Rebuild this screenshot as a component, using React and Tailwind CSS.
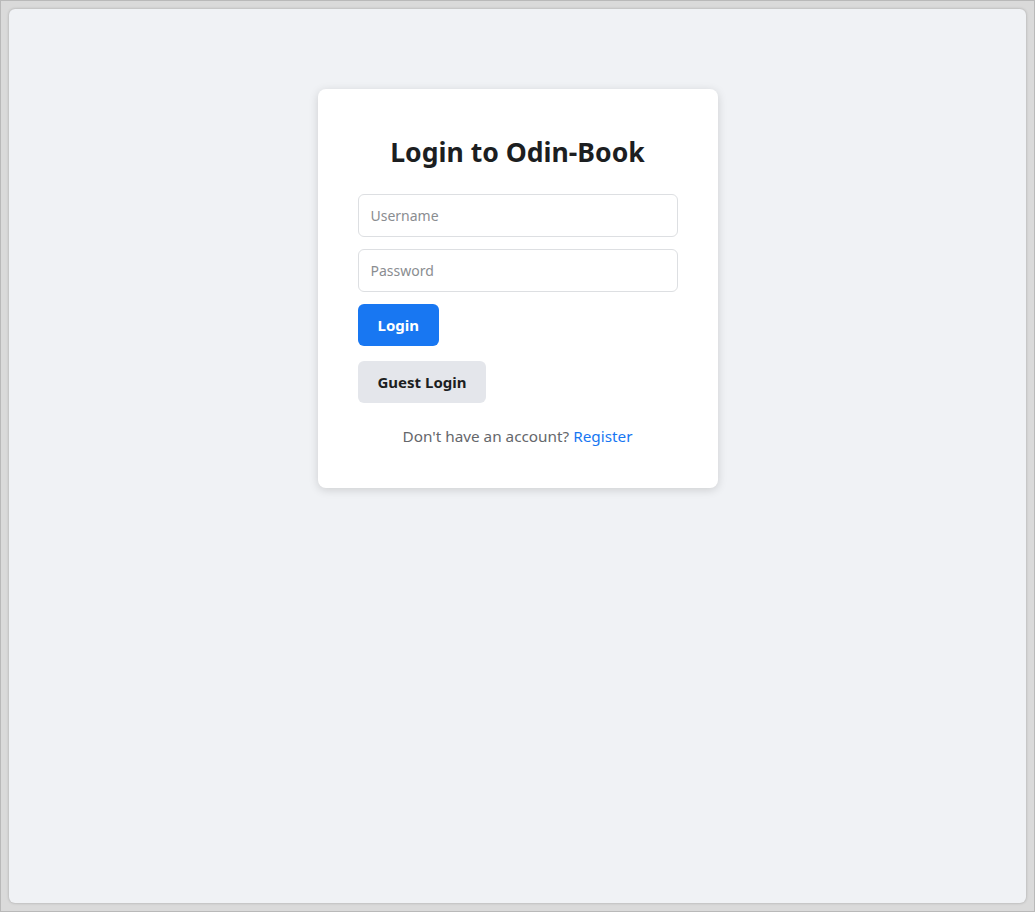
export default function App() {
  return (
    <div className="h-[912px] w-full bg-[#dadada] border border-[#b9b9b9] p-[8px]" style={{ fontFamily: '"Noto Sans", sans-serif' }}>
      <div className="h-full w-full rounded-[6px] bg-[#f0f2f5] shadow-[0_0_3px_rgba(0,0,0,0.25)] flex justify-center pt-[80px]">
        <div className="w-[400px] h-[399px] bg-white rounded-[8px] shadow-[0_2px_10px_rgba(0,0,0,0.15)] px-[40px] pt-[45px] pb-[40px] flex flex-col">
          <h1 className="text-[26.6px] leading-[36px] font-bold text-[#1c1e21] text-center mb-[24px]">Login to Odin-Book</h1>
          <input className="h-[43px] w-full rounded-[6px] border border-[#dddfe2] px-[12px] text-[14px] text-[#1c1e21] placeholder-[#8a8d91] outline-none mb-[12px]" placeholder="Username" />
          <input type="password" className="h-[43px] w-full rounded-[6px] border border-[#dddfe2] px-[12px] text-[14px] text-[#1c1e21] placeholder-[#8a8d91] outline-none mb-[12px]" placeholder="Password" />
          <div>
            <button className="h-[42px] px-[20px] rounded-[6px] bg-[#1877f2] text-white text-[15px] font-bold">Login</button>
          </div>
          <div className="mt-[15px]">
            <button className="h-[42px] px-[20px] rounded-[6px] bg-[#e4e6eb] text-[#1c1e21] text-[15px] font-bold">Guest Login</button>
          </div>
          <p className="mt-[21px] text-center text-[15.3px] leading-[24px] text-[#65676b]">
            Don't have an account? <a className="text-[#1877f2]">Register</a>
          </p>
        </div>
      </div>
    </div>
  );
}
